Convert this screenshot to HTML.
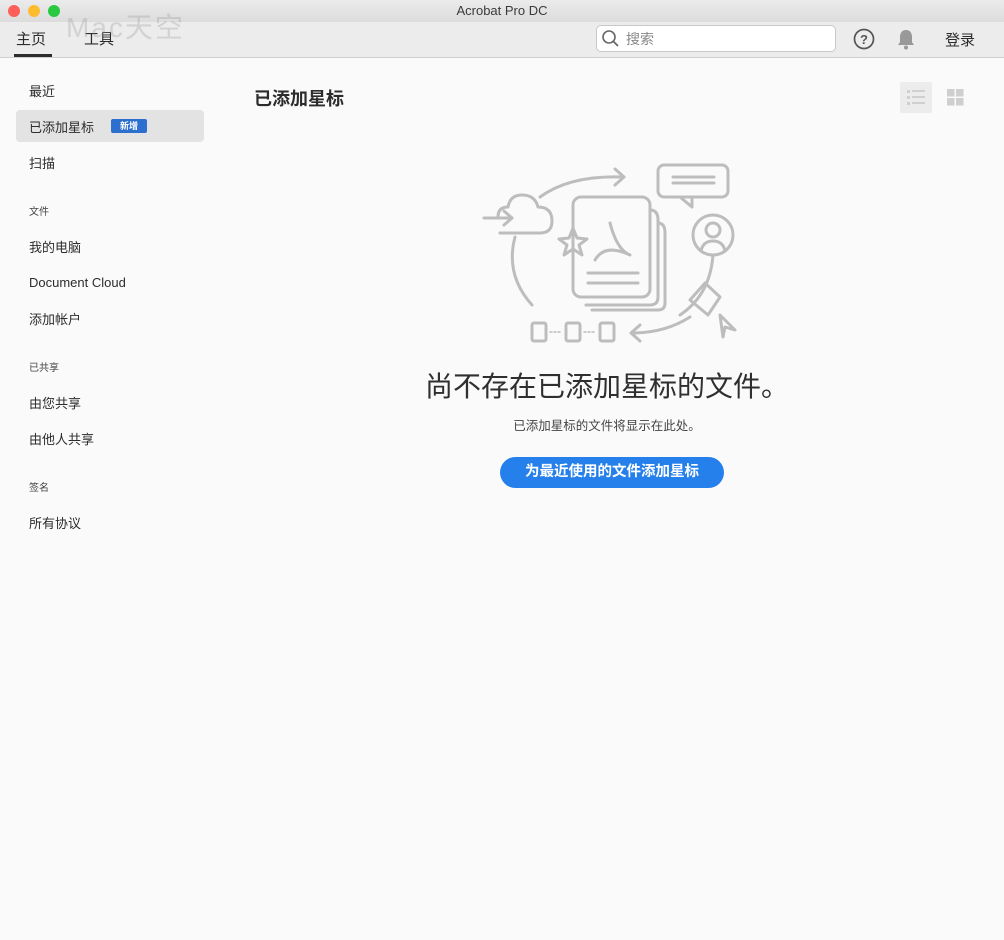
<!DOCTYPE html>
<html><head><meta charset="utf-8"><style>
*{margin:0;padding:0;box-sizing:border-box}
body{width:1004px;height:940px;background:#fafafa;font-family:"Liberation Sans","Noto Sans CJK SC",sans-serif;position:relative;overflow:hidden;color:#2c2c2c}
.title{position:absolute;top:0;left:0;width:1004px;height:22px;background:linear-gradient(#ebebeb,#dcdcdc);text-align:center;font-size:13px;line-height:22px;color:#3a3a3a}
.dot{position:absolute;top:5px;width:12px;height:12px;border-radius:50%}
.tb{position:absolute;top:22px;left:0;width:1004px;height:36px;background:#ececec;border-bottom:1px solid #d0d0d0}
.abs{position:absolute}
.side{position:absolute;left:29px;font-size:13px;color:#2c2c2c}
.hdr{position:absolute;left:29px;font-size:10px;color:#444}
</style></head><body>
<div class="title">Acrobat Pro DC</div>
<div class="dot" style="left:8px;background:#fc5f57"></div>
<div class="dot" style="left:28px;background:#fdbc2e"></div>
<div class="dot" style="left:48px;background:#28c840"></div>
<div class="tb"></div>
<div class="abs" style="left:16px;top:28px;font-size:15px">主页</div>
<div class="abs" style="left:14px;top:54px;width:38px;height:3px;background:#2c2c2c"></div>
<div class="abs" style="left:84px;top:28px;font-size:15px">工具</div>
<div class="abs" style="left:66px;top:6px;font-size:28px;color:rgba(150,150,150,.3);letter-spacing:2px">Mac天空</div>
<div class="abs" style="left:596px;top:25px;width:240px;height:27px;background:#fff;border:1px solid #c8c8c8;border-radius:5px"></div>
<svg class="abs" style="left:601px;top:29px" width="20" height="20"><circle cx="8" cy="8" r="6" fill="none" stroke="#666" stroke-width="1.6"/><line x1="12.5" y1="12.5" x2="17" y2="17" stroke="#666" stroke-width="1.8"/></svg>
<div class="abs" style="left:626px;top:29px;font-size:14px;color:#888">搜索</div>
<svg class="abs" style="left:853px;top:28px" width="22" height="22"><circle cx="11" cy="11" r="9.5" fill="none" stroke="#555" stroke-width="1.7"/><text x="11" y="16" text-anchor="middle" font-size="13" font-weight="bold" fill="#555" font-family="Liberation Sans">?</text></svg>
<svg class="abs" style="left:896px;top:28px" width="20" height="22"><path d="M10 2c-4 0-6 3-6 7v5l-2 3h16l-2-3V9c0-4-2-7-6-7z" fill="#999"/><circle cx="10" cy="19.5" r="2" fill="#999"/></svg>
<div class="abs" style="left:945px;top:29px;font-size:15px">登录</div>

<div class="side" style="top:81px">最近</div>
<div class="abs" style="left:16px;top:110px;width:188px;height:32px;background:#e3e3e3;border-radius:4px"></div>
<div class="side" style="top:117px">已添加星标</div>
<div class="abs" style="left:111px;top:119px;width:36px;height:14px;background:#2d6fce;color:#fff;font-size:9px;font-weight:bold;text-align:center;line-height:14px;border-radius:2px">新增</div>
<div class="side" style="top:153px">扫描</div>
<div class="hdr" style="top:203px">文件</div>
<div class="side" style="top:237px">我的电脑</div>
<div class="side" style="top:275px">Document Cloud</div>
<div class="side" style="top:309px">添加帐户</div>
<div class="hdr" style="top:359px">已共享</div>
<div class="side" style="top:393px">由您共享</div>
<div class="side" style="top:429px">由他人共享</div>
<div class="hdr" style="top:479px">签名</div>
<div class="side" style="top:513px">所有协议</div>

<div class="abs" style="left:254px;top:85px;font-size:18px;font-weight:bold;color:#2c2c2c">已添加星标</div>
<div class="abs" style="left:900px;top:82px;width:32px;height:31px;background:#ececec;border-radius:2px"></div>
<svg class="abs" style="left:906px;top:88px" width="20" height="20" fill="#d0d0d0"><rect x="1" y="2" width="3" height="3"/><rect x="6" y="2" width="13" height="2"/><rect x="1" y="8" width="3" height="3"/><rect x="6" y="8" width="13" height="2"/><rect x="1" y="14" width="3" height="3"/><rect x="6" y="14" width="13" height="2"/></svg>
<svg class="abs" style="left:947px;top:89px" width="18" height="18" fill="#cfcfcf"><rect x="0" y="0" width="7.5" height="7.5"/><rect x="9" y="0" width="7.5" height="7.5"/><rect x="0" y="9" width="7.5" height="7.5"/><rect x="9" y="9" width="7.5" height="7.5"/></svg>

<svg class="abs" style="left:480px;top:155px" width="270" height="195" fill="none" stroke="#bdbdbd" stroke-width="3" stroke-linecap="round" stroke-linejoin="round">
<path d="M60 42 Q90 20 143 22"/><path d="M135 14 L144 22 L135 30"/>
<path d="M20 78 H60 Q72 78 72 66 Q72 52 58 52 Q55 40 42 40 Q30 40 28 52 Q18 52 18 62"/>
<path d="M4 63 H32"/><path d="M24 56 L32 63 L24 70"/>
<path d="M35 82 Q25 120 52 150"/>
<rect x="93" y="42" width="77" height="100" rx="8"/>
<path d="M170 55 Q178 55 178 65 V142 Q178 150 170 150 H106"/>
<path d="M178 68 Q185 68 185 78 V148 Q185 155 178 155 H112"/>
<path d="M108 118 H158 M108 128 H158"/>
<path d="M93 73 L97 83 L107 84 L99 90 L102 100 L93 94 L84 100 L87 90 L79 84 L89 83 Z"/>
<path d="M130 68 Q137 95 150 100 Q125 88 115 105"/>
<rect x="178" y="10" width="70" height="32" rx="6"/>
<path d="M200 42 L212 52 L212 42"/><path d="M193 22 H234 M193 28 H234"/>
<circle cx="233" cy="80" r="20"/><circle cx="233" cy="75" r="7"/><path d="M221 96 Q223 86 233 86 Q243 86 245 96"/>
<path d="M233 100 Q230 140 200 160"/>
<path d="M152 178 Q185 178 210 162"/><path d="M160 170 L151 178 L160 186"/>
<path d="M210 145 L225 128 L240 142 L228 160 Z"/>
<path d="M240 160 L255 175 L245 172 L243 182 Z"/>
<rect x="52" y="168" width="14" height="18" rx="2"/><rect x="86" y="168" width="14" height="18" rx="2"/><rect x="120" y="168" width="14" height="18" rx="2"/>
<path d="M70 177 H82 M104 177 H116" stroke-width="1.5" stroke-dasharray="2 2"/>
</svg>

<div class="abs" style="left:0;width:1004px;top:365px;padding-left:210px;text-align:center;font-size:28px;color:#2f2f2f">尚不存在已添加星标的文件。</div>
<div class="abs" style="left:0;width:1004px;top:415px;padding-left:210px;text-align:center;font-size:12.5px;color:#444">已添加星标的文件将显示在此处。</div>
<div class="abs" style="left:500px;top:457px;width:224px;height:31px;background:#2680eb;border-radius:16px;color:#fff;font-size:14.5px;font-weight:bold;text-align:center;line-height:30px">为最近使用的文件添加星标</div>
</body></html>
